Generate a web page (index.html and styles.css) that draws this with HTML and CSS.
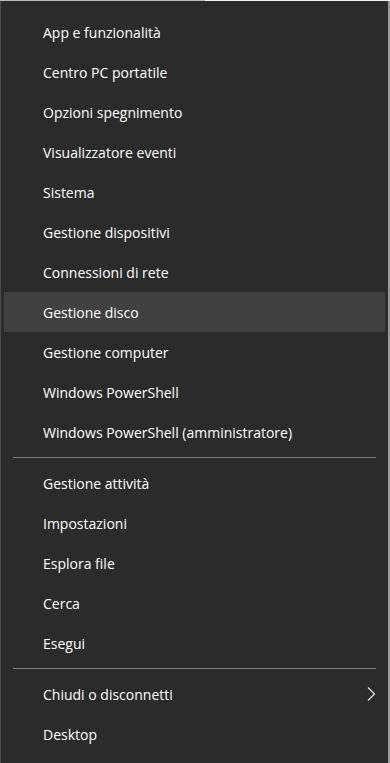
FILE: index.html
```html
<!DOCTYPE html>
<html lang="it">
<head>
  <meta charset="UTF-8" />
  <meta name="viewport" content="width=device-width, initial-scale=1.0" />
  <title>Menu Win+X</title>
  <link rel="stylesheet" href="styles.css">
</head>
<body>
  <div class="top-edge">
    <div class="top-edge-left"></div>
    <div class="top-edge-right"></div>
  </div>
  <nav class="menu">
    <ul class="menu-group">
      <li class="menu-item">App e funzionalità</li>
      <li class="menu-item">Centro PC portatile</li>
      <li class="menu-item">Opzioni spegnimento</li>
      <li class="menu-item">Visualizzatore eventi</li>
      <li class="menu-item">Sistema</li>
      <li class="menu-item">Gestione dispositivi</li>
      <li class="menu-item">Connessioni di rete</li>
      <li class="menu-item active">Gestione disco</li>
      <li class="menu-item">Gestione computer</li>
      <li class="menu-item">Windows PowerShell</li>
      <li class="menu-item">Windows PowerShell (amministratore)</li>
    </ul>
    <div class="separator"></div>
    <ul class="menu-group">
      <li class="menu-item">Gestione attività</li>
      <li class="menu-item">Impostazioni</li>
      <li class="menu-item">Esplora file</li>
      <li class="menu-item">Cerca</li>
      <li class="menu-item">Esegui</li>
    </ul>
    <div class="separator"></div>
    <ul class="menu-group">
      <li class="menu-item">
        Chiudi o disconnetti
        <svg class="chevron" width="12" height="16" viewBox="0 0 12 16">
          <path d="M3 1.5 L9.5 8 L3 14.5" fill="none" stroke="#e6e6e6" stroke-width="1.2" />
        </svg>
      </li>
      <li class="menu-item">Desktop</li>
    </ul>
  </nav>
</body>
</html>
```

FILE: styles.css
```css
body {
  margin: 0;
  background-color: #2b2b2b;
  font-family: 'Open Sans', 'Noto Sans', sans-serif;
  height: 763px;
  overflow: hidden;
}

.top-edge {
  display: flex;
  height: 1px;
}

.top-edge-left {
  width: 205px;
  background-color: #b9b9b9;
}

.top-edge-right {
  flex: 1;
  background-color: #efefef;
}

.menu {
  height: 762px;
  box-sizing: border-box;
  padding: 11px 3px 0 3px;
  border-left: 1px solid #4a4a4a;
  border-right: 2px solid #9a9a9a;
}

.menu-group {
  list-style: none;
  margin: 0;
  padding: 0;
}

.menu-item {
  height: 40px;
  display: flex;
  align-items: center;
  justify-content: space-between;
  padding: 0 8px 0 39px;
  color: #ffffff;
  font-size: 14px;
}

.menu-item.active {
  background-color: #414141;
}

.separator {
  height: 1px;
  margin: 5px 9px;
  background-color: #7d7d7d;
}
```
